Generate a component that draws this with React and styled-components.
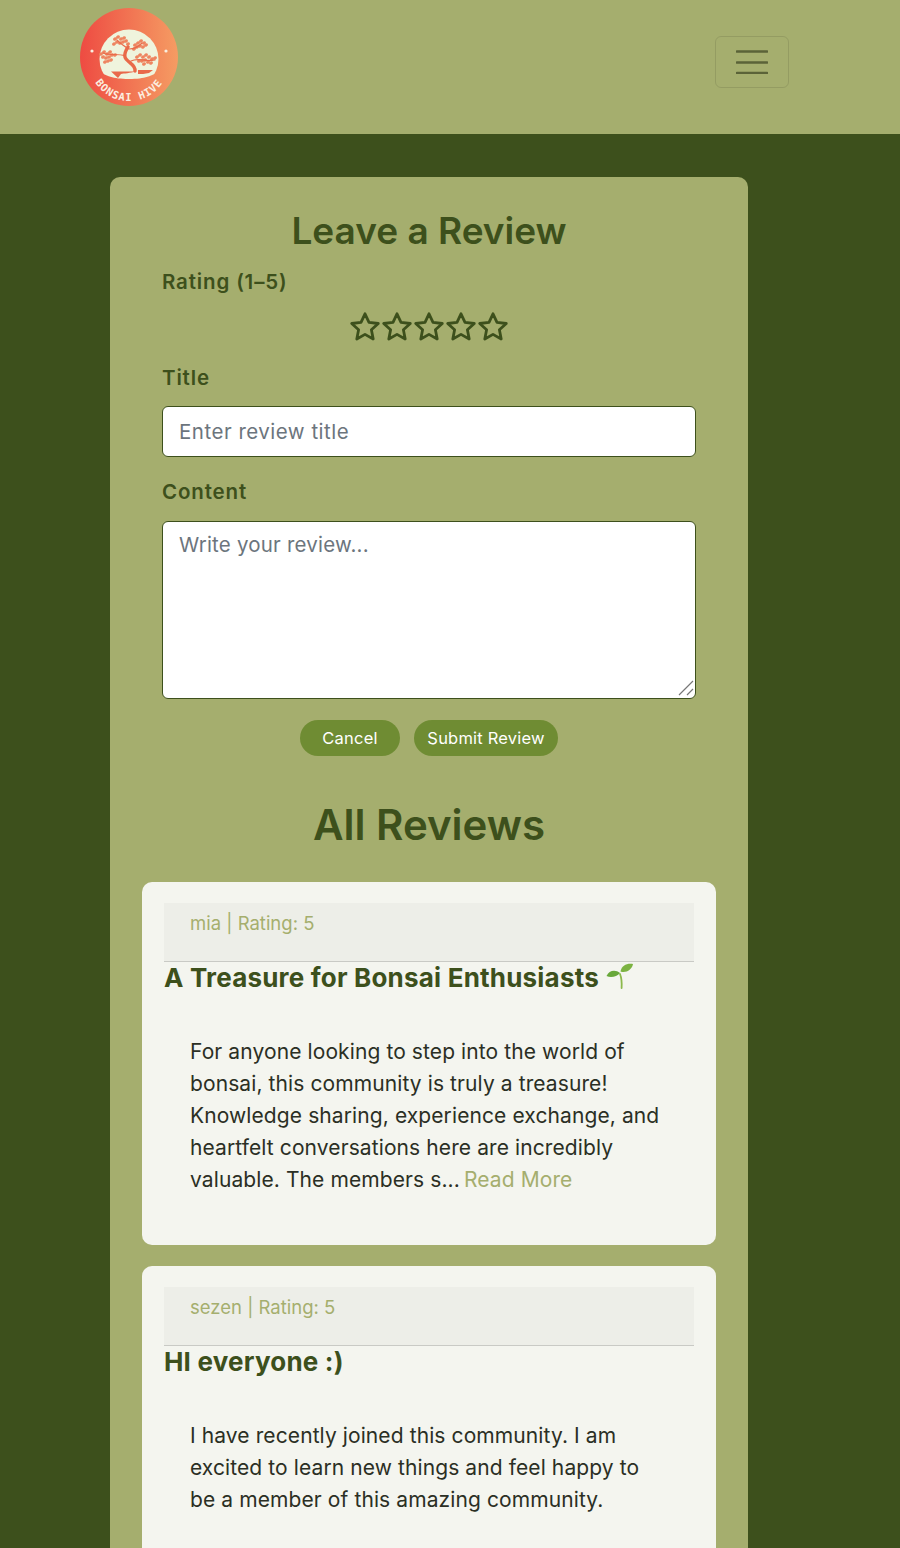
import React from 'react'
import styled, { createGlobalStyle } from 'styled-components'

const colors = {
  olive: '#a5ae6e',
  forest: '#3d501c',
  button: '#6f8c33',
  paper: '#f4f5ef',
  strip: '#edeee8',
  ink: '#2b2f24',
  placeholder: '#6c757d',
}

const GlobalStyle = createGlobalStyle`
  html, body {
    margin: 0;
    padding: 0;
  }
  body {
    background: ${colors.forest};
    font-family: Inter, "Open Sans", sans-serif;
  }
  #root {
    height: 100vh;
    overflow: hidden;
  }
  * {
    box-sizing: border-box;
  }
`

const Header = styled.header`
  height: 134px;
  background: ${colors.olive};
  padding: 8px 111px 0 80px;
  display: flex;
  justify-content: space-between;
  align-items: flex-start;
`

const LogoLink = styled.a`
  display: block;
  width: 98px;
  height: 98px;
`

const Toggler = styled.button`
  width: 74px;
  height: 52px;
  margin-top: 28px;
  padding: 0;
  background: transparent;
  border: 1px solid rgba(0, 0, 0, 0.1);
  border-radius: 6px;
  display: flex;
  align-items: center;
  justify-content: center;
`

const Main = styled.main`
  width: 638px;
  margin: 43px 0 0 110px;
  background: ${colors.olive};
  border-radius: 10px;
  padding: 32px 32px 40px;
`

const ReviewForm = styled.form`
  padding: 0 20px;
  display: flex;
  flex-direction: column;
`

const FormTitle = styled.h2`
  margin: 0;
  color: ${colors.forest};
  font-size: 37px;
  line-height: 44px;
  font-weight: 600;
  text-align: center;
`

const Label = styled.label`
  display: block;
  color: ${colors.forest};
  font-size: 20.5px;
  line-height: 30px;
  font-weight: 600;
  letter-spacing: 0.85px;
  margin-top: ${p => p.$top}px;
`

const Stars = styled.div`
  display: flex;
  justify-content: center;
  margin-top: 14px;
  height: 32px;
`

const Input = styled.input`
  display: block;
  width: 100%;
  height: 51px;
  margin-top: 13px;
  padding: 0 16px;
  border: 1px solid ${colors.forest};
  border-radius: 6px;
  background: #fff;
  font: 400 20.5px Inter, sans-serif;
  letter-spacing: 0.5px;
  color: ${colors.ink};
  &::placeholder {
    color: ${colors.placeholder};
    opacity: 1;
  }
`

const TextAreaWrap = styled.div`
  position: relative;
  margin-top: 14px;
  height: 178px;
`

const TextArea = styled.textarea`
  display: block;
  width: 100%;
  height: 100%;
  padding: 8px 16px;
  border: 1px solid ${colors.forest};
  border-radius: 6px;
  background: #fff;
  font: 400 20.5px/30px Inter, sans-serif;
  letter-spacing: 0.2px;
  color: ${colors.ink};
  resize: none;
  &::placeholder {
    color: ${colors.placeholder};
    opacity: 1;
  }
`

const Grip = styled.svg`
  position: absolute;
  right: 1px;
  bottom: 2px;
  pointer-events: none;
`

const Actions = styled.div`
  display: flex;
  justify-content: center;
  gap: 14px;
  margin-top: 21px;
`

const PillButton = styled.button`
  width: ${p => p.$width}px;
  height: 36px;
  padding: 0;
  border: none;
  border-radius: 18px;
  background: ${colors.button};
  color: #fff;
  font: 400 16.5px Inter, sans-serif;
  letter-spacing: 0.2px;
`

const ListTitle = styled.h2`
  margin: 44px 0 0;
  color: ${colors.forest};
  font-size: 42px;
  line-height: 50px;
  font-weight: 600;
  text-align: center;
`

const ReviewList = styled.div`
  margin-top: 32px;
  display: flex;
  flex-direction: column;
  gap: 21px;
`

const ReviewCard = styled.article`
  background: ${colors.paper};
  border-radius: 10px;
  padding: 21px 22px 32px;
  min-height: 363px;
`

const Meta = styled.div`
  height: 59px;
  padding: 7px 26px 0;
  background: ${colors.strip};
  border-bottom: 1px solid rgba(0, 0, 0, 0.15);
  color: ${colors.olive};
  font-size: 18.5px;
  line-height: 27px;
`

const ReviewTitle = styled.h3`
  margin: 0;
  height: 56px;
  display: flex;
  align-items: flex-start;
  gap: 7px;
  color: ${colors.forest};
  font-size: 26px;
  line-height: 32px;
  font-weight: 700;
  letter-spacing: 0.2px;
`

const ReviewBody = styled.p`
  margin: 18px 0 0;
  padding: 0 26px;
  color: ${colors.ink};
  font-size: 21px;
  line-height: 32px;
  letter-spacing: 0.1px;
`

const ReadMore = styled.a`
  margin-left: 4px;
  color: ${colors.olive};
`

const Logo = () => {
  const leaves = [
    [35, 31], [38, 29], [41, 31], [44, 30], [37, 34], [40, 35], [43, 34], [46, 33], [34, 36], [48, 36],
    [55, 37], [58, 35], [61, 33], [64, 35], [57, 39], [60, 38], [63, 39], [66, 37], [54, 41],
    [21, 46], [24, 44], [27, 46], [30, 44], [23, 49], [26, 50], [29, 49], [32, 47], [35, 47], [28, 53], [31, 52], [25, 54],
    [57, 49], [60, 47], [63, 49], [66, 47], [69, 49], [72, 51], [75, 50], [59, 53], [62, 53], [65, 52], [68, 54], [71, 55], [64, 56],
  ]
  return (
    <svg width="98" height="98" viewBox="0 0 98 98">
      <defs>
        <linearGradient id="logoFill" x1="0" x2="1" y1="0" y2="0">
          <stop offset="0" stopColor="#ee4b42" />
          <stop offset="1" stopColor="#f59c63" />
        </linearGradient>
        <path id="logoArc" d="M10 62 A40 40 0 0 0 88 62" />
        <clipPath id="logoClip">
          <path d="M15 18 H83 V62 C70 68 66 71 49 71 C32 71 28 68 15 62 Z" />
        </clipPath>
      </defs>
      <circle cx="49" cy="49" r="49" fill="url(#logoFill)" />
      <circle cx="49" cy="51" r="29.5" fill="#eff4dd" clipPath="url(#logoClip)" />
      <circle cx="12" cy="43" r="1.6" fill="#f8efe0" />
      <circle cx="86" cy="43" r="1.6" fill="#f8efe0" />
      <g fill="#ee8560">
        {leaves.map(([x, y]) => (
          <ellipse key={`${x}-${y}`} cx={x} cy={y} rx="2.1" ry="1.6" transform={`rotate(-30 ${x} ${y})`} />
        ))}
      </g>
      <g fill="none" stroke="#e96a49" strokeLinecap="round">
        <path d="M55 63 C56 56 46 54 45 49 C44 45 46 42 48 39" strokeWidth="3.4" />
        <path d="M45 48 C38 45 30 48 23 45" strokeWidth="1.2" />
        <path d="M51 53 C58 49 66 54 75 52" strokeWidth="1.2" />
        <path d="M47 40 C44 37 40 36 37 32" strokeWidth="1.2" />
        <path d="M49 41 C54 41 58 39 62 35" strokeWidth="1.2" />
      </g>
      <path d="M31 63.5 H56 C50 65 44 65.5 41 66 L38 70 C36 68 33 65.5 31 63.5 Z" fill="#e9694a" />
      <path d="M58 62 H73 L69 65 C65 66 61 66 58 66 Z" fill="#e9694a" />
      <text fill="#fbeee0" fontFamily="'DejaVu Sans Mono', monospace" fontWeight="700" fontSize="10.5" letterSpacing="1">
        <textPath href="#logoArc" startOffset="50%" textAnchor="middle">BONSAI HIVE</textPath>
      </text>
    </svg>
  )
}

const MenuIcon = () => (
  <svg width="32" height="24" viewBox="0 0 32 24" stroke="#5b6338" strokeWidth="2.6" strokeLinecap="round">
    <path d="M1 1.5 H31 M1 12.5 H31 M1 23 H31" />
  </svg>
)

const StarIcon = () => (
  <svg width="32" height="32" viewBox="0 0 32 32" fill="none" stroke={colors.forest} strokeWidth="2.8" strokeLinejoin="round">
    <path d="M16 2.8 L20 11.3 L29.3 12.5 L22.4 18.8 L24.2 28 L16 23.4 L7.8 28 L9.6 18.8 L2.7 12.5 L12 11.3 Z" />
  </svg>
)

const Seedling = () => (
  <svg width="28" height="28" viewBox="0 0 28 28">
    <path d="M15.6 26 C15.9 21 15.6 16 14 12" fill="none" stroke="#8cb94c" strokeWidth="1.8" strokeLinecap="round" />
    <path d="M0.5 14 C3 8.5 9 7 14 11 C11 14.5 5 16.5 0.5 14 Z" fill="#68a83a" />
    <path d="M14.5 9.5 C15.5 3.5 21 1 27 2 C26 7.5 20 11.5 14.5 9.5 Z" fill="#7cb342" />
  </svg>
)

const reviews = [
  {
    meta: 'mia | Rating: 5',
    title: 'A Treasure for Bonsai Enthusiasts',
    sprout: true,
    body: 'For anyone looking to step into the world of bonsai, this community is truly a treasure! Knowledge sharing, experience exchange, and heartfelt conversations here are incredibly valuable. The members s...',
    more: true,
  },
  {
    meta: 'sezen | Rating: 5',
    title: 'HI everyone :)',
    body: 'I have recently joined this community. I am excited to learn new things and feel happy to be a member of this amazing community.',
  },
]

export default function App() {
  return (
    <>
      <GlobalStyle />
      <Header>
        <LogoLink href="#"><Logo /></LogoLink>
        <Toggler type="button" aria-label="Menu"><MenuIcon /></Toggler>
      </Header>
      <Main>
        <ReviewForm>
          <FormTitle>Leave a Review</FormTitle>
          <Label $top={14}>Rating (1–5)</Label>
          <Stars>
            {[1, 2, 3, 4, 5].map(n => <StarIcon key={n} />)}
          </Stars>
          <Label $top={20}>Title</Label>
          <Input placeholder="Enter review title" />
          <Label $top={20}>Content</Label>
          <TextAreaWrap>
            <TextArea placeholder="Write your review..." />
            <Grip width="18" height="18" viewBox="0 0 18 18" stroke="#777" strokeWidth="1.2">
              <path d="M16 2 L2 16 M16 10 L10 16" />
            </Grip>
          </TextAreaWrap>
          <Actions>
            <PillButton type="button" $width={100}>Cancel</PillButton>
            <PillButton type="button" $width={144}>Submit Review</PillButton>
          </Actions>
        </ReviewForm>
        <ListTitle>All Reviews</ListTitle>
        <ReviewList>
          {reviews.map(r => (
            <ReviewCard key={r.meta}>
              <Meta>{r.meta}</Meta>
              <ReviewTitle>{r.title}{r.sprout && <Seedling />}</ReviewTitle>
              <ReviewBody>
                {r.body}
                {r.more && <ReadMore>Read More</ReadMore>}
              </ReviewBody>
            </ReviewCard>
          ))}
        </ReviewList>
      </Main>
    </>
  )
}
